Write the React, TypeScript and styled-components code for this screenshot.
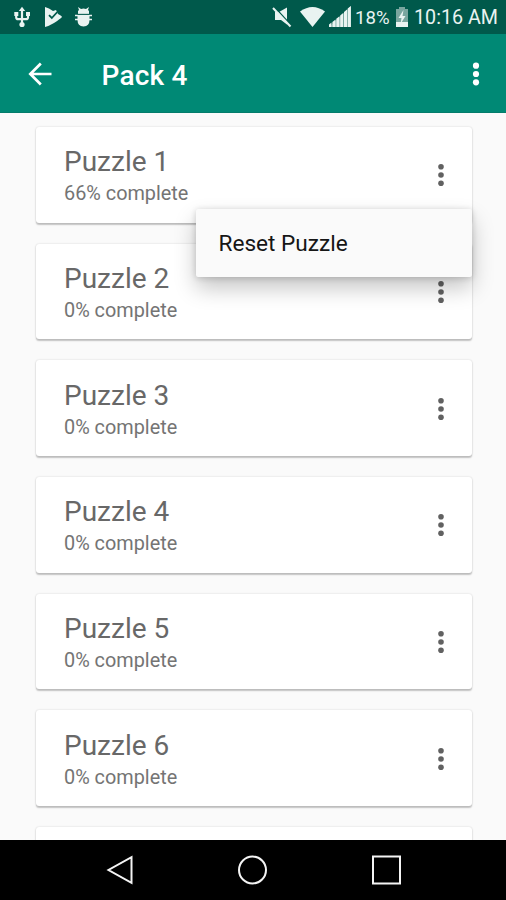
import React from "react";
import styled, { createGlobalStyle } from "styled-components";

const GlobalStyle = createGlobalStyle`
  * { box-sizing: border-box; }
  body { margin: 0; background: #fafafa; font-family: Roboto, "Liberation Sans", sans-serif; }
`;

const Screen = styled.div`
  width: 506px;
  height: 900px;
  display: flex;
  flex-direction: column;
  overflow: hidden;
  background: #fafafa;
`;

const StatusBar = styled.header`
  flex: none;
  height: 34px;
  padding: 0 7px 0 12px;
  display: flex;
  align-items: center;
  justify-content: space-between;
  background: #00594b;
  color: #e9f3f1;
`;

const StatusGroup = styled.div`
  display: flex;
  align-items: center;
  height: 34px;
`;

const StatusIcon = styled.svg<{ $gap?: number }>`
  display: block;
  flex: none;
  margin-right: ${(p) => p.$gap ?? 0}px;
`;

const StatusText = styled.span<{ $width: number; $size: number; $gap?: number }>`
  width: ${(p) => p.$width}px;
  margin-right: ${(p) => p.$gap ?? 0}px;
  font-size: ${(p) => p.$size}px;
  line-height: 24px;
  padding-top: 2px;
  white-space: nowrap;
`;

const AppBar = styled.nav`
  flex: none;
  height: 79px;
  padding: 0 21.5px 0 24px;
  display: flex;
  align-items: center;
  background: #008975;
  border-bottom: 1px solid #047c6b;
  color: #fff;
`;

const Heading = styled.h1`
  flex: 1;
  margin: 6px 0 0 45.5px;
  font-size: 28px;
  letter-spacing: 0.2px;
  line-height: 34px;
  font-weight: 500;
`;

const IconButton = styled.button`
  flex: none;
  display: flex;
  padding: 0;
  margin-top: 1px;
  border: 0;
  background: none;
  color: inherit;
`;

const List = styled.main`
  flex: 1;
  min-height: 0;
  overflow: hidden;
  display: flex;
  flex-direction: column;
  gap: 21px;
  padding: 14px 34.5px 0 35.5px;
`;

const Card = styled.article`
  position: relative;
  flex: none;
  height: 95.7px;
  padding: 0 22px 0 28.5px;
  display: flex;
  align-items: center;
  justify-content: space-between;
  background: #fff;
  border-radius: 3px;
  box-shadow: 0 1.5px 1.5px rgba(0, 0, 0, 0.22), 0 0 2px rgba(0, 0, 0, 0.15);
  color: #616161;
`;

const CardText = styled.div`
  display: flex;
  flex-direction: column;
  padding-top: 2px;
`;

const Title = styled.h2`
  margin: 0;
  font-size: 28px;
  line-height: 34px;
  font-weight: 400;
  color: #686868;
`;

const Progress = styled.p`
  margin: 3px 0 0;
  font-size: 19.85px;
  line-height: 24px;
  color: #747474;
`;

const Menu = styled.div`
  position: absolute;
  z-index: 1;
  top: 81.5px;
  right: 0;
  width: 275.5px;
  height: 68px;
  padding: 2px 22.5px 0;
  display: flex;
  align-items: center;
  background: #fafafa;
  border-radius: 2px;
  box-shadow: 0 11px 22px rgba(0, 0, 0, 0.23), 0 1px 6px rgba(0, 0, 0, 0.17);
  font-size: 22.6px;
  color: #161616;
`;

const NavBar = styled.footer`
  flex: none;
  height: 60px;
  padding: 0 104px 0 106px;
  display: flex;
  align-items: center;
  justify-content: space-between;
  background: #000;
  color: #f4f4f4;
`;

const Dots = ({ r = 2.8 }: { r?: number }) => (
  <svg width="18" height="26" viewBox="0 0 18 26" fill="currentColor">
    <circle cx="9" cy="4.7" r={r} />
    <circle cx="9" cy="13" r={r} />
    <circle cx="9" cy="21.3" r={r} />
  </svg>
);

const puzzles = [66, 0, 0, 0, 0, 0];

export default function App() {
  return (
    <Screen>
      <GlobalStyle />
      <StatusBar>
        <StatusGroup>
          <StatusIcon width="20" height="22" viewBox="0 0 20 22" $gap={12} fill="none" stroke="currentColor" strokeWidth="2.2">
            <path d="M10 4v14M4.2 8v3.2q0 2 2 2H14q2 0 2-2V8" />
            <path d="M10 .8 13.2 5H6.8z" fill="currentColor" stroke="none" />
            <circle cx="10" cy="18.5" r="2.6" fill="currentColor" stroke="none" />
            <path d="M2.3 6h4v4h-4zM14 6h4v4h-4z" fill="currentColor" stroke="none" />
          </StatusIcon>
          <StatusIcon width="19" height="22" viewBox="0 0 19 22" $gap={11}>
            <path d="M1 1q4 1 8 4l3-1 2 4q4 2 4 3-2 2-8 6-5 3-9 4z" fill="currentColor" />
            <path d="m5 9.2 2.8 2.8 5.5-6" fill="none" stroke="#00594b" strokeWidth="1.8" />
          </StatusIcon>
          <StatusIcon width="19" height="22" viewBox="0 0 19 22" fill="currentColor">
            <path d="M4 8V5l1-1-1-3 3 2q2.5-1 5 0l3-2-1 3 1 1v3zM3.5 9h12v5q0 6-6 6.5Q3.5 20 3.5 14z" />
            <path d="M1 9.5h17M1 13.5h17" stroke="currentColor" strokeWidth="1.6" />
            <path d="M3.5 8.3h12" stroke="#00594b" strokeWidth=".8" />
          </StatusIcon>
        </StatusGroup>
        <StatusGroup>
          <StatusIcon width="20" height="22" viewBox="0 0 20 22" $gap={8}>
            <path d="M3 6h4l8-4.500v17L9 14H3z" fill="currentColor" />
            <path d="m2.200.8 17 18.500" stroke="#00594b" strokeWidth="1.400" />
            <path d="m1 2 17.500 18.500" stroke="currentColor" strokeWidth="2" />
          </StatusIcon>
          <StatusIcon width="25" height="22" viewBox="0 0 25 22" $gap={4} fill="currentColor">
            <path d="M0 5.5q12.5-9 25 0L12.5 21z" />
          </StatusIcon>
          <StatusIcon width="22" height="22" viewBox="0 0 22 22" $gap={4} fill="currentColor">
            <path d="M0 21 22 0v21z" fillOpacity=".4" />
            <path d="M0 21v-2.5l2.5-2V21zM3.4 21v-5l3.2-2.5V21zM7.3 21v-8.2l3.2-2.5V21zM11.2 21V9.5l3-2.5v14zM15 21V6l3-2.5V21zM18.700 21V2.500L21.900 0v21z" />
          </StatusIcon>
          <StatusText $width={35} $gap={5} $size={18.6}>18%</StatusText>
          <StatusIcon width="14" height="22" viewBox="0 0 14 22" $gap={5}>
            <path d="M4 1h6v2h3v13H1V3h3z" fill="#79a69f" />
            <path d="M1 16h12v5H1z" fill="currentColor" />
            <path d="M8.5 4 3.5 12h3l-1 6 5-8h-3z" fill="currentColor" />
          </StatusIcon>
          <StatusText $width={85} $size={19.7}>10:16 AM</StatusText>
        </StatusGroup>
      </StatusBar>
      <AppBar>
        <IconButton aria-label="Back">
          <svg width="32" height="26" viewBox="0 0 32 26" fill="none" stroke="currentColor" strokeWidth="2.7">
            <path d="M16.8 2.5 6.3 13l10.5 10.5M6 13h21.5" />
          </svg>
        </IconButton>
        <Heading>Pack 4</Heading>
        <IconButton aria-label="More options">
          <Dots r={3.1} />
        </IconButton>
      </AppBar>
      <List>
        {puzzles.map((percent, i) => (
          <Card key={i}>
            <CardText>
              <Title>Puzzle {i + 1}</Title>
              <Progress>{percent}% complete</Progress>
            </CardText>
            <IconButton aria-label="Puzzle options">
              <Dots />
            </IconButton>
            {i === 0 && <Menu role="menu">Reset Puzzle</Menu>}
          </Card>
        ))}
        <Card aria-hidden="true" />
      </List>
      <NavBar>
        <svg width="28" height="32" viewBox="0 0 28 32" fill="none" stroke="currentColor" strokeWidth="2">
          <path d="M25.5 3.2v25.6L2.5 16z" />
        </svg>
        <svg width="32" height="32" viewBox="0 0 32 32" fill="none" stroke="currentColor" strokeWidth="2">
          <circle cx="16.5" cy="16" r="13.5" />
        </svg>
        <svg width="32" height="32" viewBox="0 0 32 32" fill="none" stroke="currentColor" strokeWidth="2">
          <rect x="3" y="2.5" width="27" height="27" />
        </svg>
      </NavBar>
    </Screen>
  );
}
